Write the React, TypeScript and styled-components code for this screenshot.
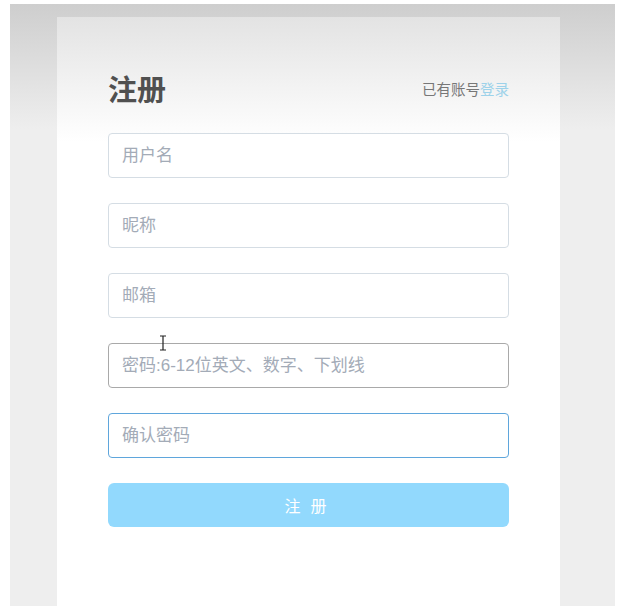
import React from 'react';
import styled, {createGlobalStyle} from 'styled-components';

const GlobalStyle = createGlobalStyle`
  html, body {
    margin: 0;
    padding: 0;
    background: #FFF;
    font-family: "Noto Sans CJK SC", "Noto Sans", sans-serif;
  }
`;

const Page = styled.div`
  height: 606px;
  padding: 4px 21px 0 10px;
  box-sizing: border-box;
`;

const Backdrop = styled.div`
  height: 100%;
  padding: 13px 55px 0 47px;
  box-sizing: border-box;
  background: linear-gradient(to bottom, #cecece 0, #eeeeee 125px, #eeeeee 100%);
`;

const Card = styled.div`
  position: relative;
  height: 100%;
  padding: 57px 51px 0;
  box-sizing: border-box;
  background: linear-gradient(to bottom, #e3e3e3 0, #ffffff 125px, #ffffff 100%);
`;

const Header = styled.div`
  display: flex;
  justify-content: space-between;
  align-items: center;
  margin-bottom: 30px;
`;

const Title = styled.h2`
  margin: 0;
  font-size: 29px;
  line-height: 29px;
  font-weight: 700;
  color: #505050;
`;

const LoginHint = styled.div`
  font-size: 14.5px;
  line-height: 20px;
  color: #777;
  > a {
    color: #9dd2ea;
    text-decoration: none;
  }
`;

type FieldState = 'normal' | 'hover' | 'focus';

const borderOf = (s: FieldState) =>
  s === 'hover' ? '#a9a9a9' : s === 'focus' ? '#5fa6dc' : '#d5dde4';

const Field = styled.input<{ $state: FieldState }>`
  display: block;
  width: 100%;
  height: 45px;
  margin: 0 0 25px;
  padding: 0 13px;
  box-sizing: border-box;
  border: 1px solid ${p => borderOf(p.$state)};
  border-radius: 4px;
  background: #FFF;
  font-family: "Liberation Sans", "Noto Sans CJK SC", sans-serif;
  font-size: 17px;
  color: #333;
  outline: none;
  &::placeholder {
    color: #a3abb7;
  }
`;

const Submit = styled.button`
  display: block;
  width: 100%;
  height: 44px;
  margin-top: 1px;
  border: none;
  border-radius: 6px;
  background: #92d9fd;
  color: #FFF;
  font-family: inherit;
  font-size: 16px;
  letter-spacing: 10px;
  text-indent: 4px;
`;

const Caret = styled.svg`
  position: absolute;
  left: 102px;
  top: 318px;
`;

const fields: { placeholder: string; state: FieldState; type?: string }[] = [
  {placeholder: '用户名', state: 'normal'},
  {placeholder: '昵称', state: 'normal'},
  {placeholder: '邮箱', state: 'normal'},
  {placeholder: '密码:6-12位英文、数字、下划线', state: 'hover', type: 'password'},
  {placeholder: '确认密码', state: 'focus', type: 'password'},
];

function App() {
  return (
    <Page>
      <GlobalStyle/>
      <Backdrop>
        <Card>
          <Header>
            <Title>注册</Title>
            <LoginHint>已有账号<a href="#">登录</a></LoginHint>
          </Header>
          {fields.map(f =>
            <Field key={f.placeholder} $state={f.state} type={f.type || 'text'} placeholder={f.placeholder}/>
          )}
          <Submit>注册</Submit>
          {/* 鼠标文本光标 */}
          <Caret width="8" height="16" viewBox="0 0 8 16">
            <path d="M1 1h6M4 1v14M1 15h6" stroke="#222" strokeWidth="1.2" fill="none"/>
          </Caret>
        </Card>
      </Backdrop>
    </Page>
  );
}

export default App;
